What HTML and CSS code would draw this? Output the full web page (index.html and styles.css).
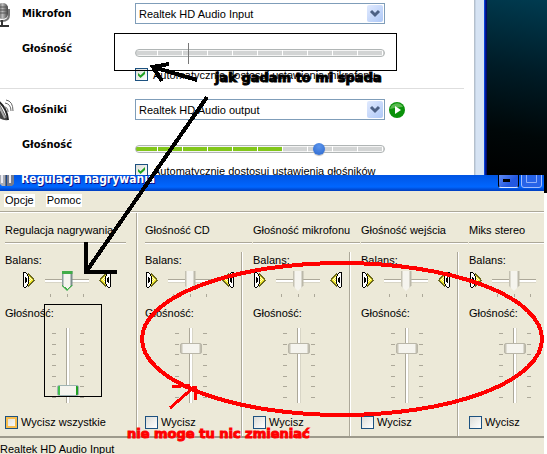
FILE: index.html
```html
<!DOCTYPE html>
<html lang="pl">
<head>
<meta charset="utf-8">
<title>Regulacja nagrywania</title>
<link rel="stylesheet" href="styles.css">
</head>
<body>
<svg class="defs" width="0" height="0" aria-hidden="true">
  <symbol id="speaker" viewBox="0 0 12 16">
    <path d="M5 1h1v1h1v1h1v1h1v1h1v1h1v2h1v1h-1v1h-1v1h-1v1h-1v1h-1v1h-1v1h-1z" fill="#6b6820"/>
    <path d="M5 3h1v1h1v1h1v1h1v1h1v2h-1v1h-1v1h-1v1h-1v1h-1z" fill="#f3eb2c"/>
    <path d="M6 5h1v1h-1zM7 6h1v1h-1zM8 7h1v1h-1zM6 7h1v1h-1zM7 8h1v1h-1zM6 9h1v1h-1z" fill="#fffbd0"/>
    <path d="M1 1h2v1h1v2h1v8h-1v2h-1v1h-2z" fill="#fff"/>
    <path d="M0 0h1v15h-1zM1 0h2v1h-2zM3 1h1v1h-1zM4 2h1v2h-1zM5 4h1v8h-1zM4 12h1v2h-1zM3 14h1v1h-1zM1 15h2v1h-2zM2 5h1v1h1v4h-1v1h-1z" fill="#000"/>
  </symbol>
</svg>
<main class="screen">
  <div class="upper">
    <form class="settings">
      <section class="device">
        <svg class="device-icon" width="22" height="28" viewBox="0 0 22 28" aria-hidden="true">
          <defs><linearGradient id="mic"><stop offset="0" stop-color="#333"/><stop offset=".5" stop-color="#bbb"/><stop offset="1" stop-color="#444"/></linearGradient></defs>
          <rect x="-3" y="0" width="11" height="16" rx="5" fill="url(#mic)"/>
          <path d="M-3 4h11M-3 7h11M-3 10h11" stroke="#555" stroke-width="1"/>
          <path d="M9 6v6q0 6-7 6h-3" fill="none" stroke="#777" stroke-width="2"/>
          <path d="M2 17v6M-2 23h11" stroke="#333" stroke-width="2"/>
        </svg>
        <label class="name" for="mic-device">Mikrofon</label>
        <div class="combo">
          <select id="mic-device"><option>Realtek HD Audio Input</option></select>
          <svg class="arrow" width="16" height="17" viewBox="0 0 16 17" aria-hidden="true"><path d="M4 6l4 4 4-4" fill="none" stroke="#4d6185" stroke-width="3"/></svg>
        </div>
        <label class="volume-name" for="mic-volume">Głośność</label>
        <input class="level idle" id="mic-volume" type="range" value="21">
        <label class="check auto"><input type="checkbox" checked>Automatycznie dostosuj ustawienia mikrofonu</label>
      </section>
      <section class="device">
        <svg class="device-icon" width="22" height="28" viewBox="0 0 22 28" aria-hidden="true">
          <path d="M-2 2L8 21q-5 1-10-3z" fill="#444"/><path d="M-2 2q9 7 10 19" fill="none" stroke="#222" stroke-width="2"/><path d="M-1 7L5 19" stroke="#aaa" stroke-width="2"/>
          <path d="M4 8q4 0 4 5M5 4q6 1 6 8M6 1q7 1 7 11" fill="none" stroke="#666" stroke-width="1"/>
        </svg>
        <label class="name" for="out-device">Głośniki</label>
        <div class="combo">
          <select id="out-device"><option>Realtek HD Audio output</option></select>
          <svg class="arrow" width="16" height="17" viewBox="0 0 16 17" aria-hidden="true"><path d="M4 6l4 4 4-4" fill="none" stroke="#4d6185" stroke-width="3"/></svg>
        </div>
        <button class="play" type="button" aria-label="Test">
          <svg width="16" height="16" viewBox="0 0 16 16"><circle cx="8" cy="8" r="8" fill="#0a920a"/><path d="M1 7a7 7 0 0 1 13-2q-6 0-13 2" fill="#5aba51"/><path d="M6 4l6 4-6 4z" fill="#fff"/></svg>
        </button>
        <label class="volume-name" for="out-volume">Głośność</label>
        <input class="level active" id="out-volume" type="range" value="75">
        <label class="check auto"><input type="checkbox" checked>Automatycznie dostosuj ustawienia głośników</label>
      </section>
    </form>
    <div class="frame"></div>
    <div class="desktop"></div>
  </div>

  <div class="lower">
    <div class="mixer">
      <header class="titlebar">
        <svg width="14" height="22" viewBox="0 0 14 22" aria-hidden="true"><path d="M0 2h6v15h-4l-2-2z" fill="#a9adb8"/><path d="M7 2h7v13l-2 2h-5z" fill="#777c8c"/><path d="M2 5v9M10 5v9" stroke="#ececf4" stroke-width="2"/><path d="M6 2v15" stroke="#333" stroke-width="1"/></svg>
        <h1>Regulacja nagrywania</h1>
        <button class="winbtn" type="button" aria-label="Minimalizuj"><svg width="19" height="20" viewBox="0 0 19 20"><path d="M4 12h7v3h-7z" fill="#000"/></svg></button>
        <button class="winbtn max" type="button" aria-label="Maksymalizuj"><svg width="19" height="20" viewBox="0 0 19 20"><path d="M4.500 5v10.500h10v-10.500" fill="none" stroke="#8fb0fa"/></svg></button>
      </header>
      <nav class="menu"><button type="button">Opcje</button><button type="button">Pomoc</button></nav>
      <div class="channels">
        <section class="channel master">
          <h2>Regulacja nagrywania</h2>
          <div class="strip">
            <label for="b1">Balans:</label>
            <div class="balance"><svg class="spk" width="12" height="16"><use href="#speaker"/></svg><div class="pan"><input id="b1" type="range"><div class="ticks"><i></i><i></i><i></i></div></div><svg class="spk right" width="12" height="16"><use href="#speaker"/></svg></div>
            <label for="v1">Głośność:</label>
            <div class="fader"><div class="scale"><i></i><i></i><i></i><i></i><i></i><i></i><i></i></div><input id="v1" type="range" value="11"><div class="scale"><i></i><i></i><i></i><i></i><i></i><i></i><i></i></div></div>
            <label class="check hot"><input type="checkbox">Wycisz wszystkie</label>
          </div>
        </section>
        <div class="group">
          <section class="channel">
            <h2>Głośność CD</h2>
            <div class="strip">
              <label for="b2">Balans:</label>
              <div class="balance"><svg class="spk" width="12" height="16"><use href="#speaker"/></svg><div class="pan"><input id="b2" type="range"><div class="ticks"><i></i><i></i><i></i></div></div><svg class="spk right" width="12" height="16"><use href="#speaker"/></svg></div>
              <label for="v2">Głośność:</label>
              <div class="fader"><div class="scale"><i></i><i></i><i></i><i></i><i></i><i></i><i></i></div><input id="v2" type="range" value="76"><div class="scale"><i></i><i></i><i></i><i></i><i></i><i></i><i></i></div></div>
              <label class="check"><input type="checkbox">Wycisz</label>
            </div>
          </section>
          <section class="channel">
            <h2>Głośność mikrofonu</h2>
            <div class="strip">
              <label for="b3">Balans:</label>
              <div class="balance"><svg class="spk" width="12" height="16"><use href="#speaker"/></svg><div class="pan"><input id="b3" type="range"><div class="ticks"><i></i><i></i><i></i></div></div><svg class="spk right" width="12" height="16"><use href="#speaker"/></svg></div>
              <label for="v3">Głośność:</label>
              <div class="fader"><div class="scale"><i></i><i></i><i></i><i></i><i></i><i></i><i></i></div><input id="v3" type="range" value="76"><div class="scale"><i></i><i></i><i></i><i></i><i></i><i></i><i></i></div></div>
              <label class="check"><input type="checkbox">Wycisz</label>
            </div>
          </section>
          <section class="channel">
            <h2>Głośność wejścia</h2>
            <div class="strip">
              <label for="b4">Balans:</label>
              <div class="balance"><svg class="spk" width="12" height="16"><use href="#speaker"/></svg><div class="pan"><input id="b4" type="range"><div class="ticks"><i></i><i></i><i></i></div></div><svg class="spk right" width="12" height="16"><use href="#speaker"/></svg></div>
              <label for="v4">Głośność:</label>
              <div class="fader"><div class="scale"><i></i><i></i><i></i><i></i><i></i><i></i><i></i></div><input id="v4" type="range" value="76"><div class="scale"><i></i><i></i><i></i><i></i><i></i><i></i><i></i></div></div>
              <label class="check"><input type="checkbox">Wycisz</label>
            </div>
          </section>
          <section class="channel">
            <h2>Miks stereo</h2>
            <div class="strip">
              <label for="b5">Balans:</label>
              <div class="balance"><svg class="spk" width="12" height="16"><use href="#speaker"/></svg><div class="pan"><input id="b5" type="range"><div class="ticks"><i></i><i></i><i></i></div></div></div>
              <label for="v5">Głośność:</label>
              <div class="fader"><div class="scale"><i></i><i></i><i></i><i></i><i></i><i></i><i></i></div><input id="v5" type="range" value="76"><div class="scale"><i></i><i></i><i></i><i></i><i></i><i></i><i></i></div></div>
              <label class="check"><input type="checkbox">Wycisz</label>
            </div>
          </section>
        </div>
      </div>
      <footer class="status">Realtek HD Audio Input</footer>
    </div>
    <div class="edge"></div>
  </div>

  <svg class="notes" width="547" height="454" viewBox="0 0 547 454">
    <g fill="none" stroke="#000" shape-rendering="crispEdges">
      <path d="M114.500 33.500h282v37h-282zM44.500 304.500h57v92h-57z"/>
      <path d="M207 97L86 272M86 242v30h31" stroke-width="4"/>
      <path d="M197 80L153 67M169 64l-16 3 9 14" stroke-width="4"/>
    </g>
    <g fill="none" stroke="#f00" stroke-width="4" shape-rendering="crispEdges">
      <ellipse cx="342" cy="339" rx="200" ry="76"/>
      <path d="M170 408l24-21M172 387l18-2M195 386v14" stroke-width="3"/>
    </g>
    <text x="215" y="82">jak gadam to mi spada</text>
    <text class="red" x="127" y="438">nie moge tu nic zmieniać</text>
  </svg>
</main>
</body>
</html>
```
FILE: styles.css
```css
* { box-sizing: border-box; }

body {
  margin: 0;
  background: #fff;
  color: #000;
  font: 11px/16px "Liberation Sans", Arial, sans-serif;
}

button, select, input { margin: 0; font: inherit; color: inherit; }
button { padding: 0; border: 0; background: none; }
svg { display: block; }
.defs { position: absolute; }

.screen {
  position: relative;
  display: flex;
  flex-direction: column;
  min-height: 100vh;
  overflow: hidden;
}

/* Device settings window */
.upper { display: flex; height: 175px; overflow: hidden; }
.settings { flex: 1; padding: 3px 10px 0 0; }
.frame {
  width: 13px;
  background: linear-gradient(90deg, #b5c0cc 0 1px, #c5d3e4 1px 2px, #d6e3f3 2px 10px, #0841d8 10px 11px, #001a98 11px 12px, #000b68 12px);
}
.desktop { width: 60px; background: linear-gradient(190deg, #003b50, #001c27 40%, #000708 75%, #000); }

.device {
  display: grid;
  grid-template-columns: 22px 113px 250px 20px;
  grid-template-rows: 21px 43px 15px;
  padding-bottom: 6px;
  border-bottom: 1px solid #dedede;
  margin-bottom: 10px;
}
.device-icon { grid-row: 1 / 3; }
.name, .volume-name { font-family: "DejaVu Sans Condensed", "Noto Sans", sans-serif; font-weight: bold; }
.name { line-height: 22px; }
.volume-name { grid-column: 2; padding-top: 17px; }

.combo { display: grid; }
.combo > * { grid-area: 1 / 1; }
.combo select {
  appearance: none;
  width: 100%;
  height: 21px;
  padding: 0 20px 0 3px;
  border: 1px solid #7f9db9;
  border-radius: 0;
  background: #fff;
}
.arrow {
  place-self: center end;
  margin-right: 2px;
  background: linear-gradient(135deg, #e1eafe, #aec8f7);
  border-radius: 2px;
  pointer-events: none;
}
.play { margin-left: 4px; }

.level {
  grid-column: 3;
  appearance: none;
  width: 100%;
  height: 8px;
  margin-top: 25px;
  border: 1px solid #b0b5b5;
  border-radius: 4px;
  background:
    repeating-linear-gradient(90deg, transparent 0 24px, #fff 24px 25px) -3px 0 / 275px 100% no-repeat,
    linear-gradient(90deg, var(--fill) 147px, #d2d4d4 147px) 0 1px / 100% 4px no-repeat,
    #f4f4f4;
}
.idle { --fill: #d2d4d4; }
.active { --fill: #82c71b; }
.idle::-webkit-slider-thumb { appearance: none; width: 1px; height: 21px; background: #777; }
.active::-webkit-slider-thumb {
  appearance: none;
  width: 12px;
  height: 12px;
  border-radius: 50%;
  background: radial-gradient(circle at 50% 30%, #5b94ec, #2b67cd);
  box-shadow: 0 1px 1px #bbb;
}

.check { display: flex; align-items: center; gap: 3px; white-space: nowrap; }
.auto { grid-column: 3; gap: 5px; }
.check input {
  appearance: none;
  display: grid;
  flex: none;
  width: 13px;
  height: 13px;
  border: 1px solid #1c5180;
  background: linear-gradient(135deg, #dcdcd7, #fff);
}
.check input:checked::after {
  content: "";
  width: 7px;
  height: 7px;
  margin: 2px;
  background: #21a121;
  clip-path: polygon(0 28%, 36% 62%, 100% 0, 100% 42%, 36% 100%, 0 66%);
}
.hot input { box-shadow: inset 0 0 0 2px #f8bd4d; }

/* Recording mixer window */
.lower { display: flex; flex: 1; }
.mixer { flex: 1; min-width: 0; display: flex; flex-direction: column; background: #ece9d8; }
.edge { width: 3px; background: linear-gradient(#000 18px, #fff 18px); }

.titlebar {
  display: flex;
  align-items: flex-end;
  height: 16px;
  padding-right: 2px;
  overflow: hidden;
  background: linear-gradient(#0054e3, #0066ff 12px, #0050dc 14px, #003dbe);
}
.titlebar h1 {
  flex: 1;
  margin: 0 0 0 7px;
  color: #fff;
  font: bold 12px/24px "DejaVu Sans Condensed", "Noto Sans", sans-serif;
  text-shadow: 1px 1px #0f1089;
}
.winbtn {
  margin: 0 0 3px 1px;
  border: 1px solid #fff;
  border-radius: 3px;
  background: linear-gradient(135deg, #7aa0fb, #2358e0 70%);
  border-color: #000 #000 #dce8ff;
}
.max { border-color: #9fbcff; background: #2763e8; margin-left: 2px; }

.menu {
  display: flex;
  align-items: flex-start;
  gap: 11px;
  height: 22px;
  padding: 3px 4px 0;
  border-bottom: 1px solid #fff;
  box-shadow: inset 0 -1px #aca899;
}
.menu button { padding: 0 1px; background: #fff; line-height: 13px; }

.channels { display: flex; flex: 1; border-bottom: 2px solid #9d9a8c; }
.master {
  flex: none;
  width: 138px;
  padding: 0 11px 0 5px;
  border-right: 1px solid #fff;
  box-shadow: inset -1px 0 #aca899;
}
.group { display: flex; flex: 1; min-width: 0; gap: 1px; padding-left: 7px; overflow: hidden; }
.group .channel { flex: none; width: 107px; }
.channel { display: flex; flex-direction: column; }
.channel h2 {
  margin: 0;
  padding: 9px 0 5px;
  border-bottom: 1px solid #fff;
  box-shadow: inset 0 -1px #aca899;
  font: inherit;
  white-space: nowrap;
}
.strip { display: flex; flex: 1; flex-direction: column; margin-top: 8px; }
.group .strip { width: 98px; border-right: 1px solid #fff; box-shadow: inset -1px 0 #aca899; }
.group .channel:last-child .strip { border: 0; box-shadow: none; }
.strip > label { line-height: 16px; }

.balance { display: flex; align-items: flex-start; gap: 10px; height: 37px; padding: 3px 0 0 1px; }
.master .balance, .master .fader { margin-left: 17px; }
.spk { flex: none; margin-top: 1px; shape-rendering: crispEdges; }
.right { transform: scaleX(-1); }
.pan { width: 44px; }
.pan input {
  appearance: none;
  display: block;
  width: 100%;
  height: 20px;
  background: linear-gradient(#aca899 1px, #fff 1px 3px, #d8d5c6 3px) 0 8px / 100% 4px no-repeat;
}
.pan input::-webkit-slider-thumb {
  appearance: none;
  width: 11px;
  height: 20px;
  background: linear-gradient(90deg, #c4c1b2 1px, #f5f4ee 2px 8px, #bbb8a9 9px);
  clip-path: polygon(0 0, 100% 0, 100% 72%, 50% 100%, 0 72%);
}
.master .pan input::-webkit-slider-thumb {
  background:
    linear-gradient(#41ad49, #41ad49) 0 0 / 100% 3px no-repeat,
    linear-gradient(37deg, #41ad49 5px, transparent 5px) 0 0 / 50% 100% no-repeat,
    linear-gradient(-37deg, #41ad49 5px, transparent 5px) 100% 0 / 50% 100% no-repeat,
    linear-gradient(90deg, #8c9e9e 1px, #f5f4ee 2px 8px, #7c8e8e 9px);
}
.ticks { display: flex; justify-content: space-between; padding: 3px 5px 0; }
.ticks i { width: 1px; height: 3px; background: #aca899; }

.fader { display: flex; gap: 1px; padding: 7px 0 0 30px; }
.scale { display: flex; flex-direction: column; justify-content: space-between; width: 4px; height: 65px; margin-top: 5px; }
.scale i { height: 1px; background: #aca899; }
.fader input {
  appearance: none;
  writing-mode: vertical-lr;
  direction: rtl;
  width: 22px;
  height: 75px;
  background: linear-gradient(90deg, #aca899 1px, #fff 1px 3px, #d8d5c6 3px) 9px 0 / 4px 100% no-repeat;
}
.fader input::-webkit-slider-thumb {
  appearance: none;
  width: 22px;
  height: 11px;
  border: 1px solid #b9b6a8;
  border-radius: 2px;
  background: linear-gradient(90deg, #c9c6b8 1px, #f5f4ee 2px 18px, #c0bdae 19px);
}
.master .fader input::-webkit-slider-thumb {
  border-color: #9fb3b3;
  background: linear-gradient(90deg, #41c04b 2px, #f5f4ee 2px 18px, #21a121 18px);
}
.strip .check { margin-top: 11px; }

.status { height: 16px; padding-top: 3px; line-height: 16px; }

/* Hand-drawn notes over both windows */
.notes { position: absolute; top: 0; left: 0; pointer-events: none; }
.notes text { font: bold 13px "DejaVu Sans", sans-serif; stroke: #000; }
.notes .red { fill: #f00; stroke: #f00; }
```
